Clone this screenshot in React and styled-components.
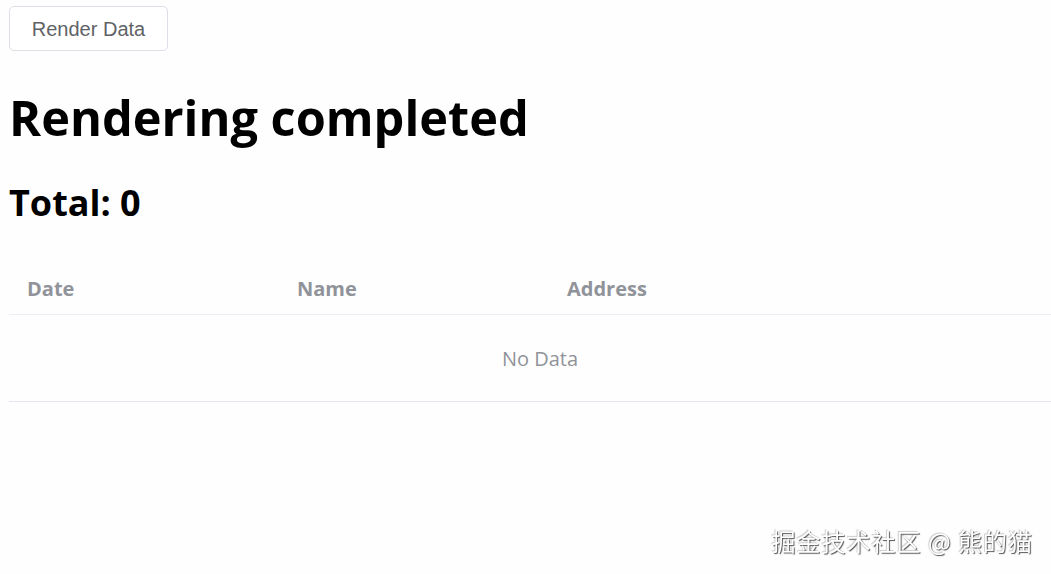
import React from 'react';
import styled, { createGlobalStyle } from 'styled-components';

const GlobalStyle = createGlobalStyle`
  html, body {
    margin: 0;
    background: #fefefe;
    overflow: hidden;
  }
  body {
    padding: 6px 9px;
    font-family: "Open Sans", "Noto Sans CJK SC", sans-serif;
    color: #000;
  }
`;

const Page = styled.div`
  display: flex;
  flex-direction: column;
  align-items: flex-start;
`;

const Button = styled.button`
  height: 45px;
  width: 159px;
  padding: 0;
  background: #fff;
  border: 1px solid #dcdfe6;
  border-radius: 5px;
  color: #606266;
  font-family: "Liberation Sans", Arial, sans-serif;
  font-size: 20px;
  line-height: 45px;
`;

const Title = styled.h1`
  margin: 31px 0 0 0;
  font-size: 48.7px;
  font-weight: 700;
  line-height: 70px;
`;

const Total = styled.h2`
  margin: 26px 0 0 0;
  font-size: 36px;
  font-weight: 700;
  line-height: 50px;
`;

const Table = styled.div`
  margin-top: 34px;
  width: 1062px;
`;

const HeadRow = styled.div`
  display: grid;
  grid-template-columns: 270px 270px 1fr;
  border-bottom: 1px solid #ebeef5;
  height: 52px;
  align-items: center;
`;

const HeadCell = styled.div`
  padding-left: 18px;
  font-size: 20px;
  font-weight: 700;
  color: #909399;
`;

const Empty = styled.div`
  height: 86px;
  display: flex;
  align-items: center;
  justify-content: center;
  border-bottom: 1px solid #e4e7ed;
  color: #909399;
  font-size: 20px;
`;

const Watermark = styled.div`
  position: fixed;
  right: 18px;
  bottom: 16px;
  color: #fff;
  font-size: 24px;
  font-family: "Noto Sans CJK SC", sans-serif;
  text-shadow: 1px 1px 1px #555, -1px -1px 1px #ccc;
  letter-spacing: 1px;
`;

export default function App() {
  return (
    <>
      <GlobalStyle />
      <Page>
        <Button>Render Data</Button>
        <Title>Rendering completed</Title>
        <Total>Total: 0</Total>
        <Table>
          <HeadRow>
            <HeadCell>Date</HeadCell>
            <HeadCell>Name</HeadCell>
            <HeadCell>Address</HeadCell>
          </HeadRow>
          <Empty>No Data</Empty>
        </Table>
      </Page>
      <Watermark>掘金技术社区 @ 熊的猫</Watermark>
    </>
  );
}
